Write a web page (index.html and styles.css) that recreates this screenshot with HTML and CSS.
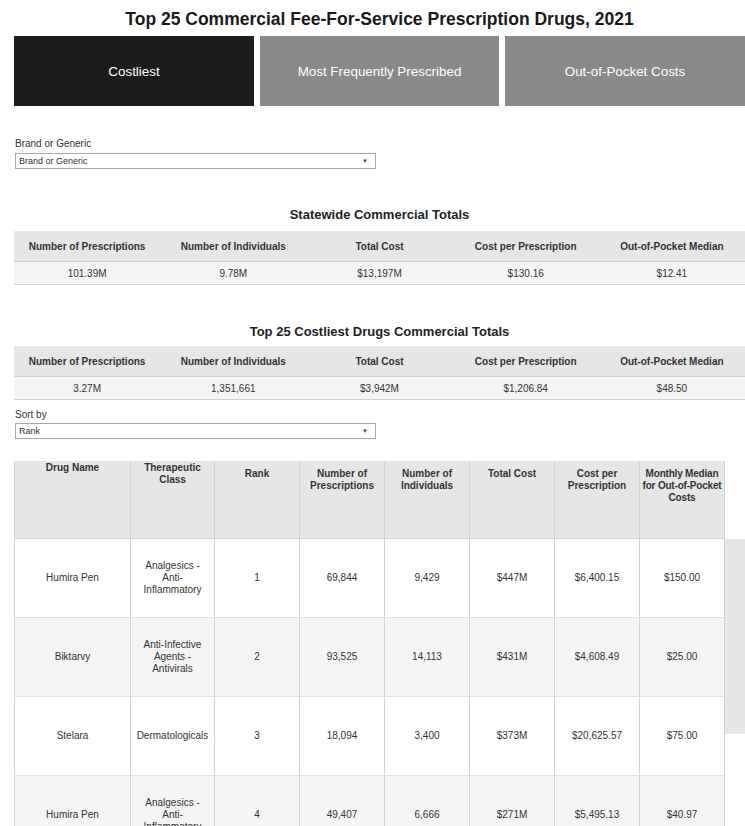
FILE: index.html
```html
<!DOCTYPE html>
<html>
<head>
<meta charset="utf-8">
<link rel="stylesheet" href="styles.css">
</head>
<body>
<h1 class="title">Top 25 Commercial Fee-For-Service Prescription Drugs, 2021</h1>
<div class="tabs">
  <div class="tab active">Costliest</div>
  <div class="tab">Most Frequently Prescribed</div>
  <div class="tab last">Out-of-Pocket Costs</div>
</div>

<div class="filter first-filter">
  <div class="flabel">Brand or Generic</div>
  <div class="select"><span>Brand or Generic</span><span class="arrow">▼</span></div>
</div>

<h2 class="sect">Statewide Commercial Totals</h2>
<div class="totals">
  <div class="th">Number of Prescriptions</div>
  <div class="th">Number of Individuals</div>
  <div class="th">Total Cost</div>
  <div class="th">Cost per Prescription</div>
  <div class="th">Out-of-Pocket Median</div>
  <div class="td">101.39M</div>
  <div class="td">9.78M</div>
  <div class="td">$13,197M</div>
  <div class="td">$130.16</div>
  <div class="td">$12.41</div>
</div>

<h2 class="sect second">Top 25 Costliest Drugs Commercial Totals</h2>
<div class="totals">
  <div class="th">Number of Prescriptions</div>
  <div class="th">Number of Individuals</div>
  <div class="th">Total Cost</div>
  <div class="th">Cost per Prescription</div>
  <div class="th">Out-of-Pocket Median</div>
  <div class="td">3.27M</div>
  <div class="td">1,351,661</div>
  <div class="td">$3,942M</div>
  <div class="td">$1,206.84</div>
  <div class="td">$48.50</div>
</div>

<div class="filter sort-filter">
  <div class="flabel">Sort by</div>
  <div class="select"><span>Rank</span><span class="arrow">▼</span></div>
</div>

<div class="grid-wrap">
  <div class="grid">
    <div class="gh up">Drug Name</div>
    <div class="gh up">Therapeutic Class</div>
    <div class="gh">Rank</div>
    <div class="gh">Number of Prescriptions</div>
    <div class="gh">Number of Individuals</div>
    <div class="gh">Total Cost</div>
    <div class="gh">Cost per Prescription</div>
    <div class="gh tight">Monthly Median<br>for Out-of-Pocket<br>Costs</div>

    <div class="gc">Humira Pen</div>
    <div class="gc">Analgesics - Anti-Inflammatory</div>
    <div class="gc">1</div>
    <div class="gc">69,844</div>
    <div class="gc">9,429</div>
    <div class="gc">$447M</div>
    <div class="gc">$6,400.15</div>
    <div class="gc">$150.00</div>

    <div class="gc alt">Biktarvy</div>
    <div class="gc alt">Anti-Infective Agents - Antivirals</div>
    <div class="gc alt">2</div>
    <div class="gc alt">93,525</div>
    <div class="gc alt">14,113</div>
    <div class="gc alt">$431M</div>
    <div class="gc alt">$4,608.49</div>
    <div class="gc alt">$25.00</div>

    <div class="gc">Stelara</div>
    <div class="gc">Dermatologicals</div>
    <div class="gc">3</div>
    <div class="gc">18,094</div>
    <div class="gc">3,400</div>
    <div class="gc">$373M</div>
    <div class="gc">$20,625.57</div>
    <div class="gc">$75.00</div>

    <div class="gc alt">Humira Pen</div>
    <div class="gc alt">Analgesics - Anti-Inflammatory</div>
    <div class="gc alt">4</div>
    <div class="gc alt">49,407</div>
    <div class="gc alt">6,666</div>
    <div class="gc alt">$271M</div>
    <div class="gc alt">$5,495.13</div>
    <div class="gc alt">$40.97</div>
  </div>
  <div class="scroll"><div class="thumb"></div></div>
</div>
</body>
</html>
```

FILE: styles.css
```css
html, body {
  margin: 0;
  padding: 0;
  background: #fff;
  height: 826px;
  overflow: hidden;
  font-family: "Liberation Sans", Arial, sans-serif;
  color: #333;
}

.title {
  margin: 0;
  padding: 8px 0 0 14px;
  height: 28px;
  font-size: 17.5px;
  line-height: 22px;
  font-weight: bold;
  text-align: center;
  color: #1a1a1a;
}

.tabs {
  display: flex;
  gap: 6px;
  margin-left: 14px;
  height: 70px;
}

.tab {
  flex: 0 0 239px;
  display: flex;
  align-items: center;
  justify-content: center;
  background: #898989;
  color: #fff;
  font-size: 13.4px;
}

.tab.active {
  flex-basis: 240px;
  background: #1c1c1c;
}

.tab.last {
  flex-basis: 240px;
}

.filter {
  margin-left: 15px;
}

.first-filter {
  margin-top: 32px;
}

.flabel {
  font-size: 10px;
  line-height: 12px;
  color: #333;
  margin-bottom: 3px;
}

.sort-filter .flabel {
  margin-bottom: 2px;
}

.select {
  width: 356px;
  height: 14px;
  border: 1px solid #a9a9a9;
  display: flex;
  justify-content: space-between;
  align-items: center;
  padding: 0 0 0 3px;
  font-size: 9px;
  color: #333;
  box-sizing: content-box;
}

.select .arrow {
  font-size: 6px;
  margin-right: 7px;
  color: #444;
}

.sect {
  margin: 0;
  font-size: 13px;
  font-weight: bold;
  text-align: center;
  color: #222;
  line-height: 16px;
  padding-left: 14px;
}

.first-filter + .sect {
  margin-top: 38px;
  margin-bottom: 8px;
}

.sect.second {
  margin-top: 39px;
  margin-bottom: 6px;
}

.totals {
  margin-left: 14px;
  display: grid;
  grid-template-columns: repeat(5, 1fr);
}

.totals .th {
  background: #e6e6e6;
  height: 30px;
  line-height: 31px;
  font-size: 10px;
  font-weight: bold;
  text-align: center;
  color: #333;
  border-bottom: 1px solid #cfcfcf;
}

.totals .td {
  background: #f4f4f4;
  height: 22px;
  line-height: 23px;
  font-size: 10px;
  text-align: center;
  color: #333;
  border-bottom: 1px solid #cfcfcf;
}

.sort-filter {
  margin-top: 9px;
}

.grid-wrap {
  margin-top: 22px;
  margin-left: 14px;
  display: flex;
}

.grid {
  display: grid;
  grid-template-columns: 117px 84px 85px 85px 85px 85px 85px 85px;
  grid-auto-rows: 79px;
  grid-template-rows: 78px;
  width: 711px;
}

.gh {
  background: #e6e6e6;
  font-size: 10px;
  font-weight: bold;
  line-height: 12px;
  text-align: center;
  padding: 7px 1px 0;
  border-right: 1px solid #d2d2d2;
  border-bottom: 1px solid #d2d2d2;
  color: #333;
}

.gh.tight {
  padding: 7px 0 0;
  white-space: nowrap;
  letter-spacing: -0.2px;
}

.gh.up {
  padding-top: 1px;
}

.gc {
  display: flex;
  align-items: center;
  justify-content: center;
  text-align: center;
  font-size: 10px;
  line-height: 12px;
  padding: 0 4px;
  background: #fff;
  border-right: 1px solid #d2d2d2;
  border-bottom: 1px solid #e0e0e0;
  color: #333;
}

.gc:nth-child(8n+1), .gh:nth-child(8n+1) {
  border-left: 1px solid #d2d2d2;
}

.gc.alt {
  background: #f4f4f4;
}

.scroll {
  width: 20px;
  padding-top: 78px;
}

.thumb {
  height: 195px;
  background: #e6e6e6;
}
```
